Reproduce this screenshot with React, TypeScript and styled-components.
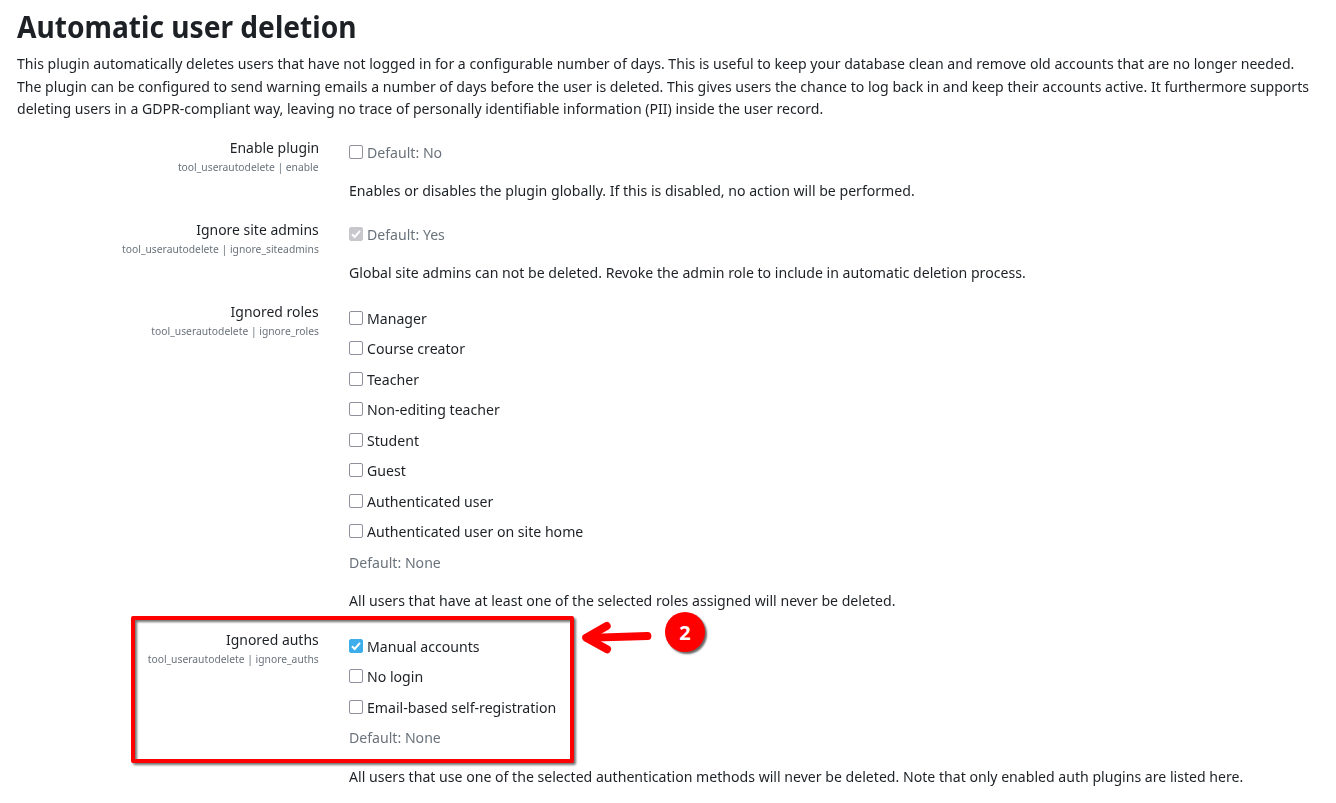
import React from "react";
import styled, { createGlobalStyle } from "styled-components";

const Global = createGlobalStyle`
  *{box-sizing:border-box}
  html,body{margin:0;background:#fff;overflow:hidden}
  body{font-family:"Noto Sans",sans-serif;font-size:15px;line-height:22.5px;color:#1d2125}
`;
const Page = styled.main`position:relative;width:1336px;height:803px;padding:9px 17px 0;overflow:hidden;`;
const Title = styled.h1`width:max-content;margin:0 0 7px;font-size:30px;line-height:36px;font-weight:700;transform:scaleX(.9375);transform-origin:left;`;
const Intro = styled.p`margin:0 0 16px;white-space:nowrap;`;
const Line = styled.span<{ $x?: number; $right?: boolean }>`
  display:block;width:max-content;margin-left:${p => (p.$right ? "auto" : "0")};
  transform:scaleX(${p => p.$x ?? 0.94});transform-origin:${p => (p.$right ? "right" : "left")};
`;
const Setting = styled.section`display:grid;grid-template-columns:302px 1fr;column-gap:30px;margin-bottom:16px;`;
const Label = styled.div`line-height:22px;`;
const Key = styled.div`font-size:11.25px;line-height:17px;color:#6a737b;`;
const Control = styled.div`padding-top:5px;white-space:nowrap;`;
const Choice = styled.div<{ $muted?: boolean }>`display:flex;align-items:center;gap:4px;height:22.5px;color:${p => (p.$muted ? "#6a737b" : "inherit")};`;
const Options = styled.div`display:flex;flex-direction:column;gap:8px;padding-top:2px;margin-bottom:8px;`;
const Box = styled.span<{ $state?: string }>`display:flex;width:14px;height:14px;border-radius:2px;border:1px solid ${p => p.$state === "on" ? "#3daee9" : p.$state === "off" ? "#c8c8cc" : "#8f8f9d"};background:${p => p.$state === "on" ? "#3daee9" : p.$state === "off" ? "#c8c8cc" : "#fff"};`;
const Default = styled.div`color:#6a737b;`;
const Help = styled.p`margin:16px 0 0;`;
const Frame = styled.div`position:absolute;left:131px;top:616px;width:443px;height:147px;border:4px solid #f00;border-radius:2px;filter:drop-shadow(2px 2px 1px rgba(0,0,0,.55));`;
const Arrow = styled.svg`position:absolute;left:575px;top:615px;`;
const Badge = styled.div`position:absolute;left:665px;top:612px;width:40px;height:40px;border-radius:50%;background:#f00;color:#fff;font-weight:700;font-size:20px;line-height:41px;text-align:center;box-shadow:2px 2px 2px rgba(0,0,0,.6);`;

function Check({ state }: { state?: string }) {
  return <Box $state={state}>{state && <svg width="12" height="12" viewBox="0 0 12 12"><path d="M2 6.2 4.7 9 10 2.8" fill="none" stroke="#fff" strokeWidth="2" /></svg>}</Box>;
}

type RowProps = { name: string; id: string; help: string; children: React.ReactNode };
function Row({ name, id, help, children }: RowProps) {
  return (
    <Setting>
      <Label><Line $right $x={0.93}>{name}</Line><Key><Line $right $x={0.916}>tool_userautodelete | {id}</Line></Key></Label>
      <Control>{children}<Help><Line>{help}</Line></Help></Control>
    </Setting>
  );
}

const intro = [
  "This plugin automatically deletes users that have not logged in for a configurable number of days. This is useful to keep your database clean and remove old accounts that are no longer needed.",
  "The plugin can be configured to send warning emails a number of days before the user is deleted. This gives users the chance to log back in and keep their accounts active. It furthermore supports",
  "deleting users in a GDPR-compliant way, leaving no trace of personally identifiable information (PII) inside the user record.",
];
const roles = ["Manager", "Course creator", "Teacher", "Non-editing teacher", "Student", "Guest", "Authenticated user", "Authenticated user on site home"];
const auths = ["Manual accounts", "No login", "Email-based self-registration"];

export default function App() {
  return <Page><Global />
    <Title>Automatic user deletion</Title>
    <Intro>{intro.map((t, i) => <Line key={t} $x={i === 0 ? 0.9395 : 0.938}>{t}</Line>)}</Intro>
    <Row name="Enable plugin" id="enable" help="Enables or disables the plugin globally. If this is disabled, no action will be performed."><Choice $muted><Check /><Line>Default: No</Line></Choice></Row>
    <Row name="Ignore site admins" id="ignore_siteadmins" help="Global site admins can not be deleted. Revoke the admin role to include in automatic deletion process."><Choice $muted><Check state="off" /><Line>Default: Yes</Line></Choice></Row>
    <Row name="Ignored roles" id="ignore_roles" help="All users that have at least one of the selected roles assigned will never be deleted."><Options>{roles.map(r => <Choice key={r}><Check /><Line>{r}</Line></Choice>)}</Options><Default><Line>Default: None</Line></Default></Row>
    <Row name="Ignored auths" id="ignore_auths" help="All users that use one of the selected authentication methods will never be deleted. Note that only enabled auth plugins are listed here."><Options>{auths.map((a, i) => <Choice key={a}><Check state={i === 0 ? "on" : undefined} /><Line>{a}</Line></Choice>)}</Options><Default><Line>Default: None</Line></Default></Row>
    <Frame />
    <Arrow width="82" height="44" viewBox="0 0 82 44" fill="none" stroke="#f00" strokeLinecap="round" strokeLinejoin="round"><path d="M31.7 11 11.2 22.8 32 34.3" strokeWidth="8" /><path d="M13 21.5 24 17.5 27 22 24 28Z" fill="#f00" strokeWidth="1" /><path d="M12 22.8 72.5 21" strokeWidth="7.8" /></Arrow>
    <Badge>2</Badge>
  </Page>;
}
